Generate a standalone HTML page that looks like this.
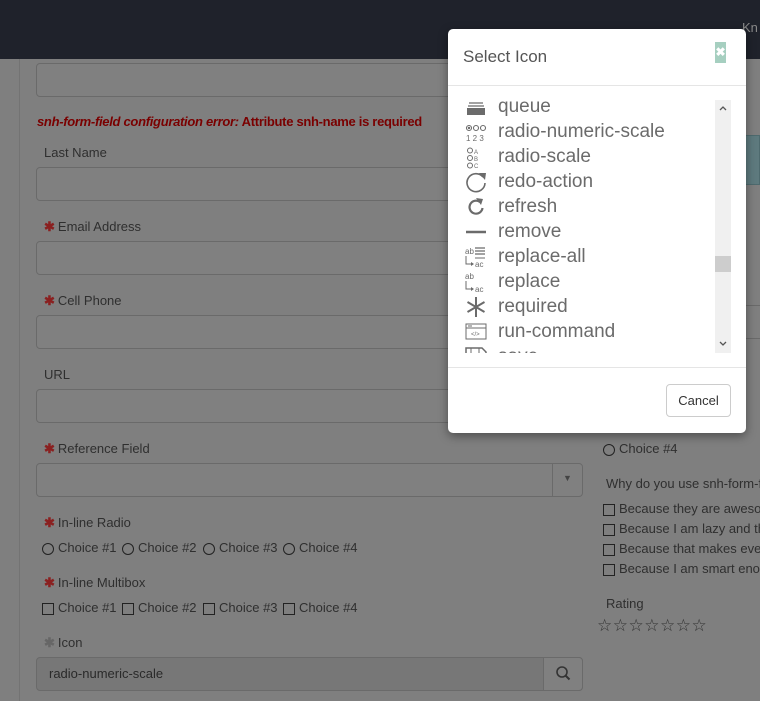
<!DOCTYPE html>
<html><head><meta charset="utf-8"><style>
*{box-sizing:border-box;margin:0;padding:0}
body{width:760px;height:701px;overflow:hidden;background:#7f7f7f;font-family:"Liberation Sans",sans-serif;position:relative;color:#2e2e2e}
.nav{position:absolute;left:0;top:0;width:760px;height:59px;background:#1f222b}
.side{position:absolute;left:19px;top:59px;width:1px;height:642px;background:#737373}
.inp{position:absolute;left:36px;width:547px;height:34px;border:1px solid #6a6a6a;border-radius:4px;background:#808080}
.lbl{position:absolute;left:44px;font-size:13px;color:#2f2f2f}
.st{color:#8a2020;font-weight:bold;margin-right:3px}
.ch{position:absolute;font-size:13px;color:#2f2f2f;white-space:nowrap}
.r{display:inline-block;width:12px;height:12px;border:1px solid #222;border-radius:50%;vertical-align:-3px;margin-right:4px}
.c{display:inline-block;width:12px;height:12px;border:1px solid #222;vertical-align:-3px;margin-right:4px}
.modal{position:absolute;left:448px;top:29px;width:298px;height:404px;background:#fff;border-radius:5px;box-shadow:0 3px 10px rgba(0,0,0,.4)}
.it{position:absolute;left:50px;font-size:19px;color:#6b6b6b;line-height:22px}
.ic{position:absolute;left:17px;width:22px;height:22px}
.rc{position:absolute;left:0;top:0;width:760px;height:701px;overflow:hidden}
</style></head><body>
<div class="nav"><span style="position:absolute;left:742px;top:20px;color:#888;font-size:13px">Kn</span></div>
<div class="side"></div>
<div class="inp" style="top:63px"></div>
<div style="position:absolute;left:37px;top:114px;font-size:13px;letter-spacing:-0.3px;color:#7a0000;font-weight:bold;white-space:nowrap"><i>snh-form-field configuration error:</i> Attribute snh-name is required</div>
<div class="lbl" style="top:145px">Last Name</div>
<div class="inp" style="top:167px"></div>
<div class="lbl" style="top:219px"><span class="st">✱</span>Email Address</div>
<div class="inp" style="top:241px"></div>
<div class="lbl" style="top:293px"><span class="st">✱</span>Cell Phone</div>
<div class="inp" style="top:315px"></div>
<div class="lbl" style="top:367px">URL</div>
<div class="inp" style="top:389px"></div>
<div class="lbl" style="top:441px"><span class="st">✱</span>Reference Field</div>
<div class="inp" style="top:463px"><div style="position:absolute;left:515px;top:0;width:1px;height:32px;background:#6a6a6a"></div><span style="position:absolute;left:526px;top:9px;font-size:9px;color:#444">▼</span></div>
<div class="lbl" style="top:515px"><span class="st">✱</span>In-line Radio</div>
<div class="ch" style="left:42px;top:540px"><span class="r"></span>Choice #1</div>
<div class="ch" style="left:122px;top:540px"><span class="r"></span>Choice #2</div>
<div class="ch" style="left:203px;top:540px"><span class="r"></span>Choice #3</div>
<div class="ch" style="left:283px;top:540px"><span class="r"></span>Choice #4</div>
<div class="lbl" style="top:575px"><span class="st">✱</span>In-line Multibox</div>
<div class="ch" style="left:42px;top:600px"><span class="c"></span>Choice #1</div>
<div class="ch" style="left:122px;top:600px"><span class="c"></span>Choice #2</div>
<div class="ch" style="left:203px;top:600px"><span class="c"></span>Choice #3</div>
<div class="ch" style="left:283px;top:600px"><span class="c"></span>Choice #4</div>
<div class="lbl" style="top:635px"><span class="st" style="color:#666">✱</span>Icon</div>
<div class="inp" style="top:657px;background:#777"><span style="position:absolute;left:12px;top:8px;font-size:13px;color:#2a2a2a">radio-numeric-scale</span><div style="position:absolute;left:506px;top:-1px;width:40px;height:34px;border:1px solid #6a6a6a;border-radius:0 4px 4px 0;background:#808080"><svg width="38" height="32" viewBox="0 0 38 32"><circle cx="18" cy="14" r="5" fill="none" stroke="#333" stroke-width="1.6"/><path d="M21.5 17.5l4 4" stroke="#333" stroke-width="2"/></svg></div></div>
<div class="rc">
<div style="position:absolute;left:745px;top:135px;width:15px;height:50px;background:#5e7a7e;border:1px solid #4e6a6e"></div>
<div style="position:absolute;left:746px;top:305px;width:14px;height:1px;background:#6a6a6a"></div>
<div style="position:absolute;left:746px;top:338px;width:14px;height:1px;background:#6a6a6a"></div>
<div class="ch" style="left:603px;top:441px"><span class="r"></span>Choice #4</div>
<div class="ch" style="left:606px;top:476px;width:154px;overflow:hidden">Why do you use snh-form-field?</div>
<div class="ch" style="left:603px;top:501px;width:157px;overflow:hidden"><span class="c"></span>Because they are awesome</div>
<div class="ch" style="left:603px;top:521px;width:157px;overflow:hidden"><span class="c"></span>Because I am lazy and that</div>
<div class="ch" style="left:603px;top:541px;width:157px;overflow:hidden"><span class="c"></span>Because that makes everything</div>
<div class="ch" style="left:603px;top:561px;width:157px;overflow:hidden"><span class="c"></span>Because I am smart enough</div>
<div class="ch" style="left:606px;top:596px">Rating</div>
<div class="ch" style="left:597px;top:616px;font-size:17px;letter-spacing:0.5px;color:#333">☆☆☆☆☆☆☆</div>
</div>
<div class="modal">
 <div style="position:absolute;left:15px;top:18px;font-size:17px;color:#555">Select Icon</div>
 <div style="position:absolute;left:267px;top:13px;width:11px;height:21px;background:#a6cfc0;color:#fff;font-size:12px;font-weight:bold;text-align:center;line-height:21px">✖</div>
 <div style="position:absolute;left:0;top:56px;width:298px;height:1px;background:#e5e5e5"></div>
 <div style="position:absolute;left:0;top:66px;width:298px;height:258px;overflow:hidden">
  <svg class="ic" style="top:3px" viewBox="0 0 22 22"><path d="M2 10h18v7H2z" fill="#6b6b6b"/><path d="M4 5h14M3 8h16" stroke="#6b6b6b" stroke-width="1.3"/></svg><div class="it" style="top:1px">queue</div>
  <svg class="ic" style="top:28px" viewBox="0 0 22 22"><g fill="none" stroke="#6b6b6b" stroke-width="1.1"><circle cx="4" cy="5" r="2.5"/><circle cx="11" cy="5" r="2.5"/><circle cx="18" cy="5" r="2.5"/></g><circle cx="4" cy="5" r="1.2" fill="#6b6b6b"/><text x="1" y="18" font-size="8" fill="#6b6b6b" font-family="Liberation Sans">1 2 3</text></svg><div class="it" style="top:26px">radio-numeric-scale</div>
  <svg class="ic" style="top:52px" viewBox="0 0 22 22"><g fill="none" stroke="#6b6b6b" stroke-width="1"><circle cx="5" cy="3.5" r="2.5"/><circle cx="5" cy="11" r="2.5"/><circle cx="5" cy="18.5" r="2.5"/></g><text x="9" y="7" font-size="6" fill="#6b6b6b">A</text><text x="9" y="14" font-size="6" fill="#6b6b6b">B</text><text x="9" y="21" font-size="6" fill="#6b6b6b">C</text></svg><div class="it" style="top:51px">radio-scale</div>
  <svg class="ic" style="top:76px" viewBox="0 0 22 22"><path d="M18 6A9 9 0 1 0 20 12" fill="none" stroke="#6b6b6b" stroke-width="1.6"/><path d="M14 2l7 0-1 7z" fill="#6b6b6b"/></svg><div class="it" style="top:76px">redo-action</div>
  <svg class="ic" style="top:101px" viewBox="0 0 22 22"><path d="M15 6A6.5 6.5 0 1 0 17.5 12" fill="none" stroke="#6b6b6b" stroke-width="2.2"/><path d="M11 2l7 1-2 6z" fill="#6b6b6b"/></svg><div class="it" style="top:101px">refresh</div>
  <svg class="ic" style="top:126px" viewBox="0 0 22 22"><path d="M1 11h20" stroke="#6b6b6b" stroke-width="2.5"/></svg><div class="it" style="top:126px">remove</div>
  <svg class="ic" style="top:151px" viewBox="0 0 22 22"><text x="0" y="8" font-size="8" fill="#6b6b6b">ab</text><path d="M10 2h10M10 5h10M10 8h10" stroke="#6b6b6b" stroke-width="1.3"/><path d="M1 10v8h6" fill="none" stroke="#6b6b6b" stroke-width="1"/><path d="M6 16l3 2-3 2z" fill="#6b6b6b"/><text x="10" y="21" font-size="8" fill="#6b6b6b">ac</text><path d="M10 12h10" stroke="#6b6b6b"/></svg><div class="it" style="top:151px">replace-all</div>
  <svg class="ic" style="top:176px" viewBox="0 0 22 22"><text x="0" y="8" font-size="8" fill="#6b6b6b">ab</text><path d="M1 10v8h6" fill="none" stroke="#6b6b6b" stroke-width="1"/><path d="M6 16l3 2-3 2z" fill="#6b6b6b"/><text x="10" y="21" font-size="8" fill="#6b6b6b">ac</text></svg><div class="it" style="top:176px">replace</div>
  <svg class="ic" style="top:201px" viewBox="0 0 22 22"><path d="M11 1v20M2.5 6l17 10M2.5 16l17-10" stroke="#6b6b6b" stroke-width="2"/></svg><div class="it" style="top:201px">required</div>
  <svg class="ic" style="top:226px" viewBox="0 0 22 22"><rect x="1" y="3" width="20" height="15" fill="none" stroke="#6b6b6b" stroke-width="1"/><path d="M1 7h20M3 5h4" stroke="#6b6b6b"/><text x="6" y="15" font-size="6" fill="#6b6b6b">&lt;/&gt;</text></svg><div class="it" style="top:226px">run-command</div>
  <svg class="ic" style="top:251px" viewBox="0 0 22 22"><path d="M1 2h16l4 4v16H1z" fill="none" stroke="#6b6b6b" stroke-width="1.5"/><path d="M6 2v6h8V2" fill="none" stroke="#6b6b6b"/></svg><div class="it" style="top:251px">save</div>
 </div>
 <div style="position:absolute;left:267px;top:71px;width:16px;height:253px;background:#f0f0f0"><div style="position:absolute;top:156px;left:0;width:16px;height:16px;background:#cdcdcd"></div><svg style="position:absolute;left:4px;top:5px" width="8" height="6"><path d="M1 5l3-3 3 3" fill="none" stroke="#555" stroke-width="1.3"/></svg><svg style="position:absolute;left:4px;top:241px" width="8" height="6"><path d="M1 1l3 3 3-3" fill="none" stroke="#555" stroke-width="1.3"/></svg></div>
 <div style="position:absolute;left:0;top:338px;width:298px;height:1px;background:#e5e5e5"></div>
 <div style="position:absolute;left:218px;top:355px;width:65px;height:33px;border:1px solid #ccc;border-radius:4px;font-size:13px;color:#333;text-align:center;line-height:31px">Cancel</div>
</div>
</body></html>
